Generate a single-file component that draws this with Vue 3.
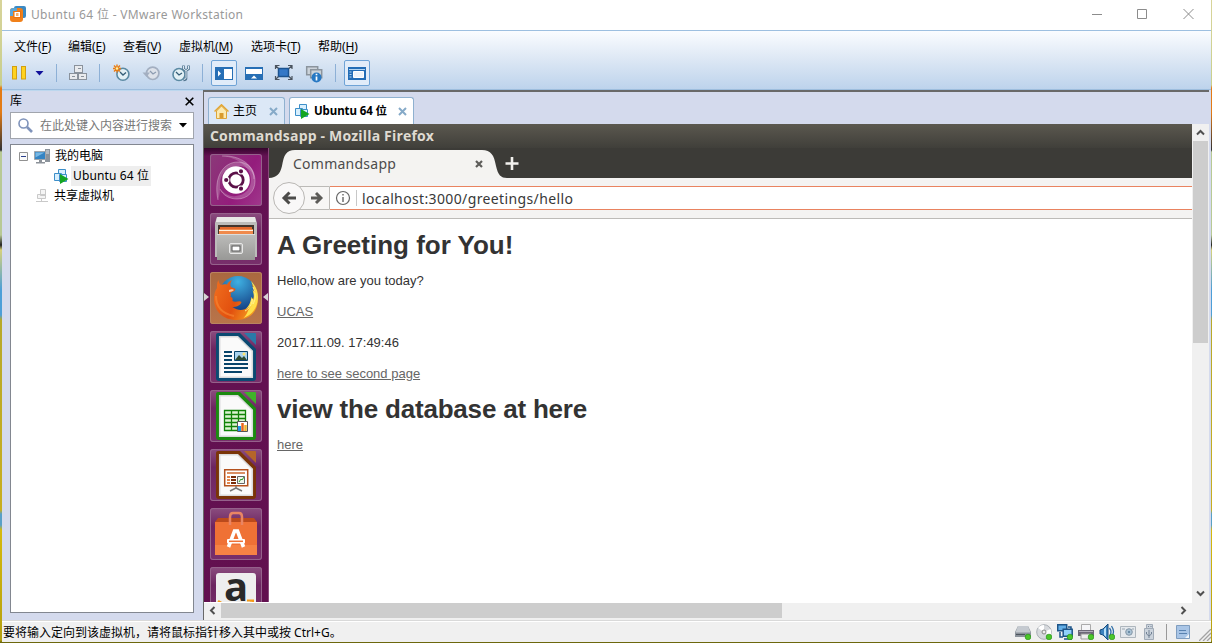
<script setup>
const menus = [
  { t: '文件', k: 'F', w: 54 },
  { t: '编辑', k: 'E', w: 55 },
  { t: '查看', k: 'V', w: 56 },
  { t: '虚拟机', k: 'M', w: 72 },
  { t: '选项卡', k: 'T', w: 67 },
  { t: '帮助', k: 'H', w: 50 },
]
const tiles = ['ubuntu', 'files', 'firefox', 'writer', 'calc', 'impress', 'store', 'amazon']
const office = {
  writer: ['#0b4a72', '#2a7aa8'],
  calc: ['#1b8a10', '#3fb32a'],
  impress: ['#7a3408', '#b5652a'],
}
const devices = ['drive', 'disc', 'net', 'printer', 'sound', 'camera', 'usb']
</script>

<template>
  <div class="desktop">
    <div class="window">
      <header class="title">
        <svg class="logo" width="16" height="16" viewBox="0 0 16 16">
          <path d="M4 2q0-2 2-2h8q2 0 2 2v8q0 2-2 2h-2V4H4z" fill="#3b8ac4" />
          <path d="M0 5q0-3 3-3h7q3 0 3 3v8q0 3-3 3H3q-3 0-3-3z" fill="#f0801a" />
          <path d="M0 5q0-3 3-3h4v3H3v5H0z" fill="#5aa5d6" />
          <rect x="4" y="5.500" width="6.500" height="6" fill="#fff" stroke="#e8720f" />
          <rect x="6" y="7" width="2.500" height="3" fill="#f6b06a" />
        </svg>
        <span class="title-text">Ubuntu 64 位 - VMware Workstation</span>
        <svg class="controls" width="104" height="12" viewBox="0 0 104 12" fill="none" stroke="#8c8c8c">
          <path d="M0 6.500h10M45.500 1.500h9v9h-9zM91.500 1l10 10M101.500 1l-10 10" />
        </svg>
      </header>

      <div class="ribbon">
        <nav class="menu">
          <span v-for="m in menus" :key="m.k" :style="{ width: m.w + 'px' }">{{ m.t }}<i>(<u>{{ m.k }}</u>)</i></span>
        </nav>
        <div class="tools">
          <svg width="209" height="26" viewBox="2 60 209 26">
            <g fill="#ffd21f" stroke="#d2a012">
              <rect x="12.500" y="66.500" width="4" height="12.500" /><rect x="21.500" y="66.500" width="4" height="12.500" />
            </g>
            <path d="M35.500 71h8l-4 4.500z" fill="#10109a" />
            <path d="M56.500 64v18M99.500 64v18M202.500 64v18" stroke="#8db0d6" />
            <g fill="#e9ebee" stroke="#8a929c">
              <rect x="74.500" y="65.500" width="8" height="7" /><path d="M78 68.500h3" />
              <rect x="69.500" y="73.500" width="8" height="6" /><path d="M72 76.500h3" />
              <rect x="78.500" y="73.500" width="8" height="6" /><path d="M81 76.500h3" />
            </g>
            <g fill="#e2f0f5" stroke="#5b8aa3" stroke-width="1.600">
              <circle cx="122.900" cy="74.300" r="6" />
              <circle cx="179" cy="74.500" r="6" />
            </g>
            <circle cx="152.700" cy="73.300" r="6.200" fill="#dde2ea" stroke="#a3afc1" stroke-width="1.700" />
            <path d="M120 72l3 3 3-2.500M176 72l3 3 3-2" fill="none" stroke="#345e78" stroke-width="1.300" />
            <path d="M150 71l3 3 3-2" fill="none" stroke="#8c9bb0" stroke-width="1.300" />
            <path d="M142.500 72.500h7.500l-3.500 4.500z" fill="#a3afc1" />
            <path d="M117 64.500v8M113 68.500h8M114 65.500l6 6M120 65.500l-6 6" stroke="#e97b12" stroke-width="1.400" />
            <circle cx="117" cy="68.500" r="1.300" fill="#fff3a0" />
            <path d="M183.500 65.500v3.500l2.500 1.500 2.500-1.500v-3.500M186 70v8.500q0 1.500-2.500 1.500" fill="none" stroke="#52758f" stroke-width="2.600" />
            <path d="M183.500 66v3l2.500 1.500 2.500-1.500v-3M186 70v8q0 1-2 1.500" fill="none" stroke="#dce9f2" stroke-width="1" />
          </svg>
          <span class="tool on">
            <svg width="18" height="13" viewBox="0 0 18 13"><path d="M0 0h18v13H0z" fill="#276fb5" /><path d="M9 2h8v10H9z" fill="#fff" /><path d="M3 3.500l3 3-3 3z" fill="#fff" /></svg>
          </span>
          <svg width="107" height="26" viewBox="237 60 107 26">
            <path d="M245 67h18v13h-18z" fill="#276fb5" /><path d="M246 69h16v5h-16z" fill="#fff" /><path d="M251 78.500l3-3 3 3z" fill="#fff" />
            <path d="M278.500 68.500h10v8h-10z" fill="#3478c7" stroke="#1c5390" stroke-width="1.500" />
            <path d="M275.500 69v-3.500h4M288 65.500h4V69M292 76v3.500h-4M279.500 79.500h-4V76M275.500 65.500l3 3M292 65.500l-3 3M292 79.500l-3-3M275.500 79.500l3-3" fill="none" stroke="#4a535e" stroke-width="1.200" />
            <g fill="#ccd3da" stroke="#8b949d" stroke-width="1.500"><path d="M306.700 66.700h11v8h-11z" /><path d="M310.700 69.700h11v8h-11z" /></g>
            <circle cx="316.500" cy="77.500" r="5" fill="#2778c3" /><path d="M316.500 76.500v4M316.500 73.800v1.400" stroke="#fff" stroke-width="1.700" />
            <path d="M335.500 64v18" stroke="#8db0d6" />
          </svg>
          <span class="tool on">
            <svg width="18" height="13" viewBox="0 0 18 13"><path d="M0 0h18v13H0z" fill="#236db6" /><path d="M1 2.500h16M1.500 5h2M1.500 7.500h2M1.500 10h2" stroke="#b5d6f2" /><path d="M5.500 4.500h10v6h-10z" fill="#eef4fa" stroke="#fff" /></svg>
          </span>
        </div>
      </div>

      <main class="body">
        <aside class="library">
          <div class="lib-head"><span>库</span><svg width="9" height="9" viewBox="0 0 9 9"><path d="M.7.7l7.600 7.600M8.300.7L.7 8.300" stroke="#000" stroke-width="1.600" /></svg></div>
          <div class="search">
            <svg width="15" height="15" viewBox="0 0 15 15" fill="none" stroke="#7f93ba"><circle cx="5.500" cy="5.500" r="4.500" stroke-width="1.600" /><path d="M9 9l5 5" stroke-width="2.600" /></svg>
            <span>在此处键入内容进行搜索</span>
            <svg class="drop" width="8" height="5" viewBox="0 0 8 5"><path d="M0 0h8L4 4.500z" fill="#000" /></svg>
          </div>
          <div class="tree">
            <div class="row root">
              <svg width="9" height="9" viewBox="0 0 9 9"><path d="M.5.500h8v8h-8z" fill="#fafafa" stroke="#919191" /><path d="M2 4.500h5" stroke="#2b3f8c" /></svg>
              <svg class="pc" width="16" height="15" viewBox="0 0 16 15"><path d="M11 0h5v13h-5z" fill="#8c949c" /><path d="M12 2h3M12 4h3" stroke="#dfe4e8" /><path d="M.5 2.500h11v8H.5z" fill="#3484c3" stroke="#a0a5ab" /><path d="M1.500 3.500h9l-9 5z" fill="#79b8e4" /><path d="M5 11h3v2h3v1.500H2V13h3z" fill="#8c9299" /></svg>
              <span>我的电脑</span>
            </div>
            <div class="row child">
              <svg width="15" height="15" viewBox="0 0 15 15"><g fill="#d8effd" stroke="#3d8fc9"><path d="M4.500.5h7v8h-7z" /><path d="M.5 4.500h7v7h-7z" /><path d="M5.500 5.500h7v7h-7z" /></g><path d="M6 5l8.500 5L6 15z" fill="#14a522" /></svg>
              <span class="sel">Ubuntu 64 位</span>
            </div>
            <div class="row shared">
              <svg width="12" height="14" viewBox="0 0 12 14" fill="#f4f4f4" stroke="#c9c9c9"><path d="M4.500.5h5v6h-5zM1.500 5.500h8v4h-8zM5.500 10v3M0 12.500h12" /></svg>
              <span>共享虚拟机</span>
            </div>
          </div>
        </aside>

        <section class="workspace">
          <div class="tabs">
            <div class="tab home">
              <svg width="15" height="15" viewBox="0 0 15 15"><path d="M2.500 7v7.500h10V7L7.500 2z" fill="#fbeab0" stroke="#dda63a" /><path d="M.5 7.500l7-6.700 7 6.700" fill="none" stroke="#e3a530" stroke-width="1.500" /><path d="M5.500 9h4v5h-4z" fill="#d99b2c" /></svg>
              <span>主页</span>
              <svg class="x" width="9" height="9" viewBox="0 0 9 9"><path d="M1 1l7 7M8 1L1 8" stroke="#86aac8" stroke-width="2" /></svg>
            </div>
            <div class="tab active">
              <svg width="15" height="15" viewBox="0 0 15 15"><g fill="#d8effd" stroke="#3d8fc9"><path d="M4.500.5h7v8h-7z" /><path d="M.5 4.500h7v7h-7z" /><path d="M5.500 5.500h7v7h-7z" /></g><path d="M6 5l8.500 5L6 15z" fill="#14a522" /></svg>
              <span>Ubuntu 64 位</span>
              <svg class="x" width="9" height="9" viewBox="0 0 9 9"><path d="M1 1l7 7M8 1L1 8" stroke="#86aac8" stroke-width="2" /></svg>
            </div>
          </div>

          <div class="viewer">
            <div class="guest">
              <div class="panel">Commandsapp - Mozilla Firefox</div>
              <div class="guest-body">
                <div class="launcher">
                  <div v-for="t in tiles" :key="t" class="tile" :class="t">
                    <svg width="52" height="52" viewBox="0 0 52 52">
                      <template v-if="t === 'ubuntu'">
                        <path d="M8 46C3 22 14 8 28 8c10 0 16 7 16 17 0-7-7-14-17-13C15 13 10 22 10 30c0 6 0 10-2 16z" fill="#fff" opacity=".2" />
                        <path d="M12 2c18-1 33 9 33 25 0 10-7 18-18 18-8 0-14-4-17-10 5 5 10 8 16 7 10-1 15-8 15-16C41 13 28 4 12 2z" fill="#fff" opacity=".2" />
                        <g fill="none" stroke="#fff" stroke-opacity=".3" stroke-width="1"><path d="M8 46C3 22 14 8 28 8c10 0 16 7 16 17M12 2c18-1 33 9 33 25 0 10-7 18-18 18-8 0-14-4-17-10" /></g>
                        <circle cx="26" cy="26" r="13.800" fill="#fff" />
                        <circle cx="26" cy="26" r="7.200" fill="none" stroke="#5b1148" stroke-width="2.800" />
                        <g fill="#5b1148" stroke="#fff" stroke-width="1.200"><circle cx="16.200" cy="26" r="2.700" /><circle cx="31" cy="17.300" r="2.700" /><circle cx="31" cy="34.700" r="2.700" /></g>
                      </template>
                      <template v-else-if="t === 'files'">
                        <path d="M7 4h38l2 6v34H5V10z" fill="#bcbcba" /><path d="M7 4h38l1 5H6z" fill="#e8e8e6" />
                        <path d="M8 12h36v10H8z" fill="#43352c" /><path d="M10 14h32v5H10z" fill="#e2692c" /><path d="M9 16h34v5H9z" fill="#f08a4c" /><path d="M9 17.500h34" stroke="#fff1df" />
                        <path d="M7 21h38v26H7z" fill="url(#metal)" /><path d="M7 21.500h38" stroke="#ddd" />
                        <rect x="19.500" y="30.500" width="13" height="10" rx="1.500" fill="#b5b5b3" stroke="#e8e8e8" /><rect x="22" y="33" width="8" height="5" fill="#fff" stroke="#555" />
                        <defs><linearGradient id="metal" x2="0" y2="1"><stop stop-color="#bdbdbb" /><stop offset="1" stop-color="#989896" /></linearGradient></defs>
                      </template>
                      <template v-else-if="t === 'firefox'">
                        <defs>
                          <radialGradient id="globe" cx=".5" cy=".15" r=".8"><stop stop-color="#3fb0e2" /><stop offset="1" stop-color="#123a80" /></radialGradient>
                          <linearGradient id="fur" x1="0" x2="1" y1=".3" y2=".7"><stop stop-color="#ee6a1c" /><stop offset=".5" stop-color="#e2500f" /><stop offset="1" stop-color="#f7a322" /></linearGradient>
                        </defs>
                        <circle cx="28" cy="23" r="19" fill="url(#globe)" />
                        <path d="M8.500 8c0 2 1 4 2.500 5 2-1 4-1 6-.5 1-2 3-4 5-4.500-2 3-2 5-1 7 1 1 4 1 4.500 2 0 2-3 3-5 4 0 1 1 2 0 4 3 0 2 4 2 4 3 2 7-1 9 1-1 4-6 5-9 5 8 6 18 2 20-6 3-7 1-13-1-17 5 5 7 14 6 20-2 10-10 16-21 16C13 48 4 39 4 27c0-5 1-8 3-11 0-3 0-6 1.500-8z" fill="url(#fur)" />
                        <path d="M41 9c6 6 8 13 6.500 21-2 9-8 14-14 16 5-5 4-9 8-12-3 1-5 3-7 4 5-4 6-8 7-13l2 3c1-4 0-7-1-10l3 3c-1-5-3-8-4.500-12z" fill="#ffdf4a" />
                        <path d="M43 15c3 6 3 12 0 17 0-2 0-4-1-5 0 6-3 10-7 12" fill="none" stroke="#fff28a" stroke-width="1" />
                        <path d="M6 24c0 12 8 18 18 20" fill="none" stroke="#f88936" stroke-width="2" opacity=".6" />
                        <path d="M19 18c2-1 4-1 5 0-1 1-3 2-5 2z" fill="#f8c6a0" />
                      </template>
                      <template v-else-if="office[t]">
                        <path d="M8 2h22l16 16v29a3 3 0 0 1-3 3H9a3 3 0 0 1-3-3V4a2 2 0 0 1 2-2z" :fill="office[t][0]" />
                        <path d="M34 2h11q1 0 1 1v11z" :fill="office[t][1]" />
                        <path d="M9.700 5.700h18L42.300 20v26.300H9.700z" fill="#fafafa" stroke="#d9dadb" stroke-width="1.500" />
                        <template v-if="t === 'writer'">
                          <path d="M14 21h8M14 25h8M14 29h8M14 33h24M14 37h24M14 41h18" stroke="#08446a" stroke-width="1.800" />
                          <path d="M24.500 20.500h13v9h-13z" fill="#a9d4ee" stroke="#08446a" /><path d="M25 29l4-5 3 3 2-2 3 4z" fill="#2e4b30" /><circle cx="34" cy="23" r="1.500" fill="#ffe570" />
                        </template>
                        <template v-else-if="t === 'calc'">
                          <path d="M14.500 20.500h21v20h-21zM21.500 20.500v20M28.500 20.500v20M14.500 24.500h21M14.500 28.500h21M14.500 32.500h21M14.500 36.500h21" fill="#dcf3d2" stroke="#118308" stroke-width="1.300" />
                          <path d="M27.500 31.500h10v10h-10z" fill="#fff" stroke="#555" /><path d="M29.500 36v5" stroke="#1a98e8" stroke-width="3" /><path d="M32.500 33v8" stroke="#e8671c" stroke-width="2.500" /><path d="M35.500 35v6" stroke="#edb72c" stroke-width="2.500" />
                        </template>
                        <template v-else>
                          <path d="M14.700 20.700h23v16h-23z" fill="#fff" stroke="#b4511d" stroke-width="1.500" /><path d="M17 24h18" stroke="#ce6a31" stroke-width="1.500" />
                          <path d="M17 28h3M17 31h3M17 34h3" stroke="#e3864e" stroke-width="2" /><path d="M21 28h5M21 31h5M21 34h5" stroke="#7a2e0b" stroke-width="2" />
                          <path d="M27.500 27.500h7v7h-7z" fill="#eef6ec" stroke="#666" /><path d="M29 33l2-3 1 1 2-3" fill="none" stroke="#2e9d28" /><path d="M26 37v2l-6 3M26 39l6 3" fill="none" stroke="#777" stroke-width="1.500" />
                        </template>
                      </template>
                      <template v-else-if="t === 'store'">
                        <path d="M8 10h36l3 4v33H5V14z" fill="#bb4a1c" /><path d="M5 14h42v33H5z" fill="#ef7135" /><path d="M5 37h42v10H5z" fill="#f68244" />
                        <path d="M20 17V9q0-4 3-4h6q3 0 3 4v8" fill="none" stroke="#e98563" stroke-width="2.500" />
                        <path d="M18.500 39l6-16h3l6 16" fill="none" stroke="#fff" stroke-width="3.600" /><rect x="17" y="31" width="18" height="4.500" rx="1" fill="#fff" /><path d="M19 33.300h14" stroke="#ef7135" stroke-width="1.500" />
                      </template>
                      <template v-else>
                        <rect x="6" y="6" width="40" height="47" rx="3" fill="#eee" /><path d="M8 34q18 12 34 1" fill="none" stroke="#f59b18" stroke-width="2.500" /><path d="M37 33.500h6v5" fill="none" stroke="#f59b18" stroke-width="2" />
                        <text x="26" y="34" text-anchor="middle" class="a">a</text>
                      </template>
                    </svg>
                  </div>
                  <svg class="mark l" width="5" height="8" viewBox="0 0 5 8"><path d="M0 0l5 4-5 4z" fill="#d8d3d6" /></svg>
                  <svg class="mark r" width="5" height="8" viewBox="0 0 5 8"><path d="M5 0L0 4l5 4z" fill="#d8d3d6" /></svg>
                </div>

                <div class="browser">
                  <div class="strip">
                    <svg width="260" height="30" viewBox="0 0 260 30">
                      <path d="M0 30c8-.5 11-4 13-12C15 7 17 2 26 2h187c9 0 12 5 14 16 2 9 5 12 11 12z" fill="#f4f3f1" />
                      <path d="M207 13l6 6M213 13l-6 6" stroke="#5e5d5a" stroke-width="2.200" />
                      <path d="M243 9v13M236.500 15.500h13" stroke="#f2f1ee" stroke-width="2.600" />
                    </svg>
                    <span class="tab-label">Commandsapp</span>
                  </div>
                  <div class="nav">
                    <svg width="61" height="40" viewBox="269 178 61 40">
                      <path d="M295 186.500h34.500v23H295z" fill="#f7f6f5" stroke="#bcbab7" />
                      <circle cx="289" cy="198" r="15.500" fill="#f9f8f8" stroke="#b9b7b4" />
                      <path d="M289.500 192.500l-5.500 5.500 5.500 5.500M284.500 198h11.500" fill="none" stroke="#4d4c4a" stroke-width="3" />
                      <path d="M316 193l5 5-5 5M320.500 198H311" fill="none" stroke="#5c5b58" stroke-width="2.900" />
                    </svg>
                    <div class="url">
                      <svg width="28" height="22" viewBox="0 0 28 22"><circle cx="13" cy="11" r="6.500" fill="none" stroke="#666" stroke-width="1.200" /><path d="M13 10v5M13 7v1.600" stroke="#666" stroke-width="1.400" /><path d="M26.500 3v16" stroke="#c8c8c8" /></svg>
                      <span>localhost:3000/greetings/hello</span>
                    </div>
                  </div>
                  <article class="page">
                    <h1>A Greeting for You!</h1>
                    <p>Hello,how are you today?</p>
                    <p><a>UCAS</a></p>
                    <p>2017.11.09. 17:49:46</p>
                    <p><a>here to see second page</a></p>
                    <h1 class="second">view the database at here</h1>
                    <p><a>here</a></p>
                  </article>
                </div>
              </div>
            </div>
            <div class="vscroll">
              <svg width="17" height="17" viewBox="0 0 17 17"><path d="M5 10.500l3.500-3.500 3.500 3.500" fill="none" stroke="#505050" stroke-width="2" /></svg>
              <div class="vthumb"></div>
              <svg width="17" height="17" viewBox="0 0 17 17"><path d="M5 6.500l3.500 3.500L12 6.500" fill="none" stroke="#505050" stroke-width="2" /></svg>
            </div>
            <div class="hscroll">
              <svg width="17" height="15" viewBox="0 1 17 15"><path d="M10.500 5L7 8.500l3.500 3.500" fill="none" stroke="#505050" stroke-width="2" /></svg>
              <div class="hthumb"></div>
              <svg width="17" height="15" viewBox="0 1 17 15"><path d="M6.500 5l3.500 3.500L6.500 12" fill="none" stroke="#505050" stroke-width="2" /></svg>
            </div>
          </div>
        </section>
      </main>

      <footer class="status">
        <span class="msg">要将输入定向到该虚拟机，请将鼠标指针移入其中或按 Ctrl+G。</span>
        <div class="devices">
          <svg v-for="d in devices" :key="d" width="16" height="16" viewBox="0 0 16 16">
            <template v-if="d === 'drive'"><path d="M3 2h10l3 6v5H0V8z" fill="#8b929a" /><path d="M3 2h10l2.500 6.500H.5z" fill="#c5cad0" /><path d="M1 10.500h9" stroke="#4c545d" /></template>
            <template v-else-if="d === 'disc'"><circle cx="8" cy="8" r="7.300" fill="#d6d9dd" stroke="#a9aeb4" /><path d="M8 8L2 4q2-3 6-3zM8 8l6 4q2-3 .5-7z" fill="#fff" /><circle cx="8" cy="8" r="2" fill="#eee" stroke="#888" /></template>
            <template v-else-if="d === 'net'"><path d="M.7.700h9v6h-9z" fill="#63aee6" stroke="#1d5488" stroke-width="1.500" /><path d="M6.200 5.200h9v7h-9z" fill="#8fd0fa" stroke="#1d5488" stroke-width="1.500" /><path d="M3 8v5h3M11 3h3v2M7 15h8" fill="none" stroke="#1d5488" stroke-width="1.500" /></template>
            <template v-else-if="d === 'printer'"><path d="M3.500.5h9v6h-9z" fill="#f5f5f7" stroke="#aaa" /><path d="M0 6h16v6H0z" fill="#6d6878" /><path d="M1 7.500h14" stroke="#b0acb9" /><path d="M3 10h10v5H3z" fill="#eee" stroke="#999" /></template>
            <template v-else-if="d === 'sound'"><path d="M1 6l3-1 5-5v16l-5-5-3-1z" fill="#3b82bf" stroke="#174b7c" /><path d="M5 5l2-2v10l-2-2z" fill="#b9e0f8" /><path d="M10.500 4q3 4 0 8M12.500 2q4 6 0 11" fill="none" stroke="#2d6da6" stroke-width="1.300" /></template>
            <template v-else-if="d === 'camera'"><path d="M.5 2.500h15v11H.5z" fill="#e5e9ed" stroke="#aeb6bd" /><path d="M2 5h3M12 5h2" stroke="#9ba6b0" /><circle cx="9" cy="8" r="3.300" fill="#a9c2d5" stroke="#8798a7" /><circle cx="9" cy="8" r="1" fill="#577b98" /></template>
            <template v-else><path d="M5.500.500h6v4h-6zM3.500 4.500h9v11h-9z" fill="#cbd3dc" stroke="#a1abb7" /><path d="M8 6v8M5.500 8v2l2.500 2 2.500-2V8M7 2.500h1M9.500 2.500h1" fill="none" stroke="#728295" /></template>
            <circle v-if="d !== 'camera' && d !== 'usb'" cx="13" cy="13" r="2.800" fill="#4cc62a" stroke="#27931a" stroke-width=".7" />
          </svg>
        </div>
        <i class="bar"></i>
        <svg class="note" width="14" height="14" viewBox="0 0 14 14"><path d="M.5.500h13v13H.5z" fill="#a9c5e6" stroke="#7f9dbf" /><path d="M3 5.500h7M3 8.500h8" stroke="#5982b0" /><path d="M9 13l4-4v4z" fill="#f2f6fa" /></svg>
        <svg class="grip" width="12" height="12" viewBox="0 0 12 12"><path d="M0 12L12 0M4 12l8-8M8 12l4-4" stroke="#a2a2a2" stroke-width="1.300" /></svg>
      </footer>
    </div>
  </div>
</template>

<style>
html, body { overflow: hidden; }
</style>

<style scoped>
* { box-sizing: border-box; }
svg { display: block; flex: none; }
.desktop {
  width: 1212px; height: 643px; padding: 0 1px 1px 2px;
  background: linear-gradient(#d8d49a 0, #c9cf8d 85px, #e37b16 88px, #e37b16 112px, #333 150px, #b8c995 152px, #b8c995 235px, #222 245px, #d6d17b 250px, #4d9fd8 290px, #4d9fd8 315px, #b7a92a 320px, #c8ae20 510px, #58a0c8 514px, #58a0c8 525px, #d5b90e 530px, #b5a011 640px, #5e5c0b);
  font-family: "Noto Sans", "Noto Sans CJK SC", sans-serif; font-size: 12px; color: #000;
}
.window { width: 1209px; height: 642px; display: flex; flex-direction: column; background: #f0f0f0; }
.title { height: 30px; background: #fff; display: flex; align-items: center; padding: 0 15px 0 8px; }
.logo { margin-top: -2px; }
.title-text { margin-left: 5px; font-size: 12px; letter-spacing: .32px; color: #999; flex: 1; line-height: 30px; height: 30px; white-space: nowrap; }
.controls { margin-top: -2px; }
.ribbon { height: 60px; border-top: 1px solid #9dbfe0; border-bottom: 1px solid #9dbddd; background: linear-gradient(#fafcff, #dfe9f5 45%, #bdd3ec); }
.menu { display: flex; height: 29px; padding: 0 0 0 12px; line-height: 32px; white-space: nowrap; }
.menu i { font-style: normal; letter-spacing: -.1px; }
.menu u { text-underline-offset: 2px; }
.tools { display: flex; height: 26px; }
.tool { width: 26px; height: 26px; display: flex; align-items: center; justify-content: center; }
.on { border: 1px solid #6fa3d6; border-radius: 2px; background: #e1ecf9; }
.body { flex: 1; display: flex; background: #d4daed; min-height: 0; }
.library { width: 201px; padding: 2px 9px 7px 8px; display: flex; flex-direction: column; border-top: 1px solid #bcd7ee; }
.lib-head { height: 19px; display: flex; justify-content: space-between; line-height: 16px; }
.lib-head svg { margin: 3.500px 0 0; }
.search { height: 27px; border: 1px solid #a1a5ad; background: #fff; display: flex; align-items: center; padding: 0 6px 0 7px; color: #777; }
.search span { margin-left: 7px; white-space: nowrap; flex: 1; line-height: 26px; }
.tree { margin-top: 5px; flex: 1; border: 1px solid #828790; background: #fff; padding-top: 1px; }
.row { height: 20px; display: flex; align-items: center; white-space: nowrap; line-height: 20px; }
.root { padding-left: 8px; }
.pc { margin: 0 5px 0 6px; }
.child { padding-left: 43px; }
.sel { margin-left: 2px; background: #eee; padding: 0 2px; height: 20px; letter-spacing: .12px; width: 80px; }
.shared { padding-left: 25px; }
.shared span { margin-left: 6px; }
.workspace { width: 1006px; border-top: 2px solid #696969; border-left: 1px solid #696969; display: flex; flex-direction: column; }
.tabs { height: 32px; display: flex; align-items: flex-end; padding-left: 4px; gap: 4px; }
.tab { height: 27px; border: 1px solid #8fb1d0; border-bottom: 0; border-radius: 3px 3px 0 0; display: flex; align-items: center; padding: 0 6px 0 5px; line-height: 26px; white-space: nowrap; }
.home { width: 77px; background: #dce8f6; }
.home span { margin-left: 4px; }
.tab .x { margin-left: auto; }
.active { width: 125px; background: #fff; font-weight: 700; }
.active span { margin-left: 4px; font-size: 11.5px; letter-spacing: -.1px; }
.viewer { display: grid; grid-template-columns: 988px 17px; grid-template-rows: 478px 17px; background: #f0f0f0; flex: 1; }
.guest { height: 478px; overflow: hidden; background: #fff; }
.panel { height: 24px; background: linear-gradient(#5b584f, #403f3a); color: #dfdbd2; font: 700 14px/24px "Open Sans", "Noto Sans", sans-serif; letter-spacing: .18px; padding-left: 6px; white-space: nowrap; }
.guest-body { display: flex; height: 454px; }
.launcher { position: relative; width: 65px; padding: 6px 6px; display: flex; flex-direction: column; gap: 7px; background: linear-gradient(#35062c 0, #641253 8px, #62104f); border-right: 1px solid #8a4a7b; overflow: hidden; }
.tile { width: 52px; height: 52px; flex: none; border-radius: 3px; background: linear-gradient(#8b4d7f, #6c2560 35%, #782f6b); box-shadow: inset 0 0 0 1px #95618b; }
.tile.ubuntu { background: linear-gradient(120deg, #8a3a78, #941c7c 60%, #a0388c); }
.tile.firefox { background: linear-gradient(#a9683f, #b9744a); box-shadow: inset 0 0 0 1px #b98460; }
.a { font: 700 40px "Open Sans", sans-serif; fill: #292929; }
.mark { position: absolute; top: 145px; }
.mark.l { left: 0; }
.mark.r { right: 0; }
.browser { width: 923px; }
.strip { height: 30px; background: #3c3b37; position: relative; }
.tab-label { position: absolute; left: 24px; top: 6px; line-height: 20px; font-size: 14px; letter-spacing: .25px; color: #4c4c4c; }
.nav { height: 41px; background: #f4f3f2; display: flex; border-bottom: 1px solid #bdbbb8; }
.url { flex: 1; height: 24px; margin-top: 8px; background: #fff; border: solid #e98360; border-width: 1px 0; display: flex; }
.url span { margin-left: 4px; font-size: 14px; letter-spacing: .37px; line-height: 23px; color: #383838; white-space: nowrap; }
.page { padding: 0 8px; display: flow-root; font: 13px/18px "Liberation Sans", Arial, sans-serif; color: #333; }
.page h1 { font-size: 26px; line-height: 18px; margin: 17.400px 0; }
.page h1.second { letter-spacing: -.2px; }
.page p { margin: 13px 0; }
.page a { color: #666; text-decoration: underline; }
.vscroll { background: #f0f0f0; padding-left: 1px; display: flex; flex-direction: column; justify-content: space-between; }
.vscroll svg { margin-left: -1px; }
.vthumb { height: 202px; width: 15px; background: #cdcdcd; margin-bottom: auto; }
.hscroll { grid-column: 1; display: flex; background: #f0f0f0; border-top: 1px solid #fff; }
.hthumb { width: 561px; height: 15px; background: #cdcdcd; margin-right: auto; }
.status { height: 22px; border-top: 1px solid #d9d9d9; display: flex; align-items: center; box-shadow: inset 0 1px #fff; padding-left: 1px; }
.msg { flex: 1; line-height: 21px; padding-top: 1px; white-space: nowrap; }
.devices { display: flex; gap: 5px; margin-right: 9px; }
.bar { width: 1px; height: 16px; background: #999; margin-right: 9px; }
.note { margin-right: 9px; }
.grip { margin: 7px 0 0; }
</style>
